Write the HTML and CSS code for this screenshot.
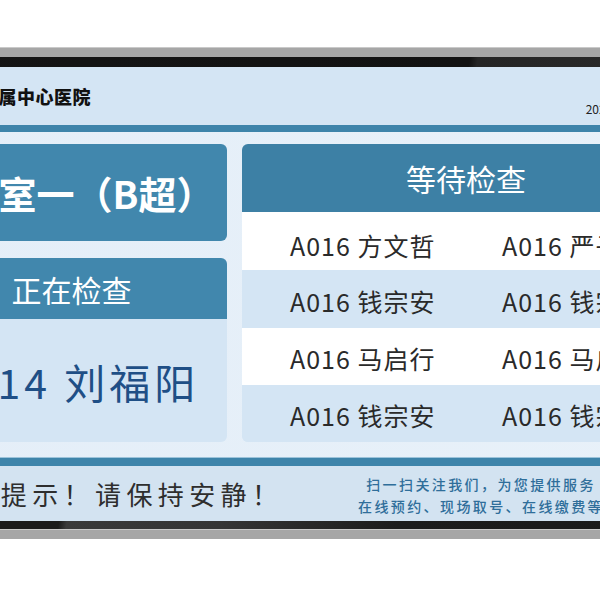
FILE: index.html
```html
<!DOCTYPE html>
<html>
    <head>
        <meta charset="utf-8">
        <title>候诊叫号</title>
        <link rel="stylesheet" href="styles.css">
    </head>
    <body>
        <div class="monitor">
            <div class="bezel-gray"></div>
            <div class="bezel-black top"></div>
            <div class="screen">
                <div class="head">
                    <div class="hospital">江南大学附属中心医院</div>
                    <div class="clock">
                        <div class="time">10:25:36</div>
                        <div class="date">2023-05-18 星期四</div>
                    </div>
                </div>
                <div class="stripe"></div>
                <div class="main">
                    <div class="left">
                        <div class="room">检查室一（B超）</div>
                        <div class="current">
                            <div class="card_title">正在检查</div>
                            <div class="current_name">A014 刘福阳</div>
                        </div>
                    </div>
                    <div class="waiting">
                        <div class="card_title big">等待检查</div>
                        <div class="row first">
                            <span>A016 方文哲</span>
                            <span>A016 严子涵</span>
                        </div>
                        <div class="row alt">
                            <span>A016 钱宗安</span>
                            <span>A016 钱宗安</span>
                        </div>
                        <div class="row">
                            <span>A016 马启行</span>
                            <span>A016 马启行</span>
                        </div>
                        <div class="row alt">
                            <span>A016 钱宗安</span>
                            <span>A016 钱宗安</span>
                        </div>
                    </div>
                </div>
                <div class="stripe foot_line"></div>
                <div class="foot">
                    <div class="notice">温馨提示！请保持安静！</div>
                    <div class="scan">
                        扫一扫关注我们，为您提供服务<br>
                        在线预约、现场取号、在线缴费等
                    </div>
                </div>
            </div>
            <div class="bezel-black bottom"></div>
            <div class="bezel-gray"></div>
        </div>
    </body>
</html>
```

FILE: styles.css
```css
body {
    margin: 0;
    overflow: hidden;
    background: #ffffff;
    font-family: "Noto Sans CJK SC", "Noto Sans", sans-serif;
}

/* monitor frame, wider than the window on both sides */
.monitor {
    margin: 47px 0 0 -102px;
    width: 804px;
}
.bezel-gray {
    height: 9px;
    background: #a6a6a6;
    border-top: 1px solid #c9c9c9;
}
.bezel-black {
    height: 10px;
}
.bezel-black.top {
    background: linear-gradient(100deg, #151515 0%, #121212 71%, #252525 72%, #2a2a2a 100%);
}
.bezel-black.bottom {
    height: 8px;
    background: linear-gradient(100deg, #1b1b1b 0%, #1b1b1b 20%, #3a3a3a 21%, #353535 40%, #1c1c1c 62%, #1a1a1a 100%);
}

/* header */
.head {
    height: 58px;
    background: #d4e5f4;
    display: flex;
    align-items: center;
    justify-content: space-between;
    padding: 0 16px 0 8px;
}
.hospital {
    font-size: 18px;
    font-weight: 900;
    letter-spacing: 0.5px;
    color: #111111;
}
.clock {
    display: flex;
    flex-direction: column;
    align-items: flex-end;
    color: #222;
}
.time {
    font-size: 22px;
    line-height: 26px;
}
.date {
    font-size: 12px;
    line-height: 16px;
}
.stripe {
    height: 7px;
    background: #3e84aa;
}
.foot_line {
    height: 8px;
    border-top: 1px solid #9cc3da;
}

/* cards */
.main {
    background: linear-gradient(90deg, #e4eef8, #e8f1f9);
    padding: 12px 12px 15px 12px;
    display: flex;
    gap: 15px;
}
.left {
    width: 317px;
    display: flex;
    flex-direction: column;
    gap: 17px;
}
.room {
    height: 97px;
    border-radius: 6px;
    background: #4187ad;
    color: #ffffff;
    font-size: 38px;
    font-weight: 700;
    display: flex;
    align-items: center;
    justify-content: center;
}
.current {
    height: 184px;
    border-radius: 6px;
    overflow: hidden;
    background: #d4e5f4;
    display: flex;
    flex-direction: column;
}
.card_title {
    height: 61px;
    background: #4187ad;
    color: #ffffff;
    font-size: 30px;
    display: flex;
    align-items: center;
    justify-content: center;
    padding-left: 6px;
}
.card_title.big {
    height: 68px;
    background: #3d80a5;
    padding-left: 0;
}
.current_name {
    flex: 1;
    display: flex;
    align-items: center;
    justify-content: center;
    font-size: 41px;
    letter-spacing: 4px;
    color: #1f4f86;
    padding-left: 4px;
}
.waiting {
    flex: 1;
    border-radius: 6px;
    overflow: hidden;
    background: #d4e5f4;
}
.row {
    height: 58px;
    box-sizing: border-box;
    display: grid;
    grid-template-columns: 212px 1fr;
    align-items: center;
    padding: 3px 0 0 48px;
    background: #ffffff;
    font-size: 25px;
    letter-spacing: 1px;
    color: #2a2a2a;
}
.row.first {
    padding-top: 8px;
}
.row.alt {
    background: #d4e5f4;
}
.row:nth-child(4), .row:nth-child(5) {
    height: 57px;
}

/* footer */
.foot {
    height: 55px;
    background: #d3e3f1;
    display: flex;
    align-items: center;
    justify-content: space-between;
    padding: 0 98px 0 40px;
}
.notice {
    font-size: 26px;
    letter-spacing: 5.4px;
    color: #2e2e2e;
}
.scan {
    font-size: 14px;
    font-weight: 500;
    line-height: 22px;
    letter-spacing: 2.4px;
    color: #2f6e9a;
    text-align: center;
    padding-top: 3px;
}
```
